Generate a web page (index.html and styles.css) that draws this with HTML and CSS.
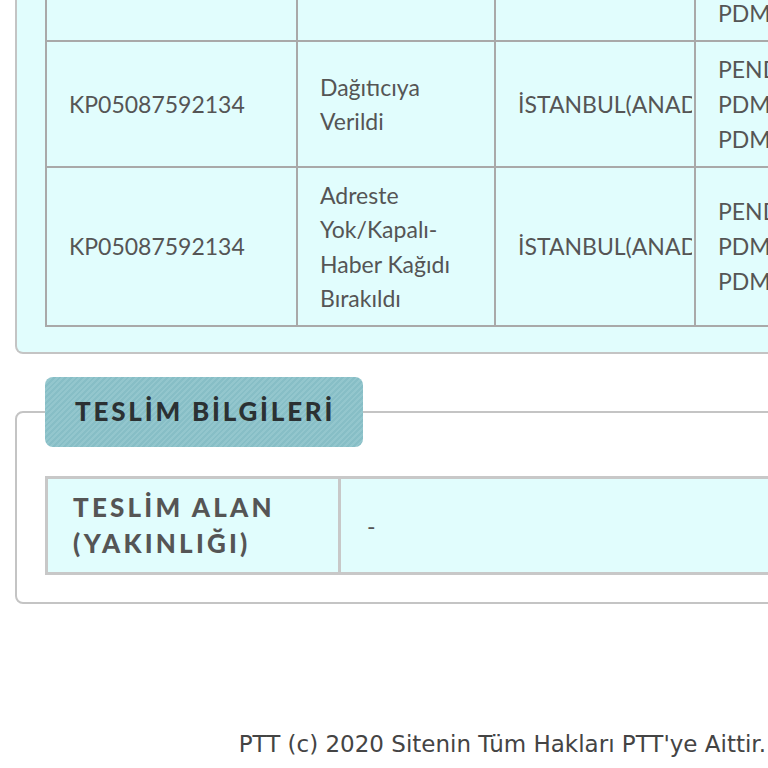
FILE: index.html
```html
<!DOCTYPE html>
<html lang="tr">
<head>
<meta charset="utf-8">
<title>Gönderi Takip</title>
<link rel="stylesheet" href="styles.css">
</head>
<body>
<div class="page">
  <div class="box box-moves">
    <table class="moves">
      <colgroup><col class="c1"><col class="c2"><col class="c3"><col class="c4"></colgroup>
      <tr>
        <td>KP05087592134</td>
        <td>Kabul Edildi</td>
        <td><span class="clip">İSTANBUL(ANADOLU)</span></td>
        <td class="place">PENDİK<br>PDM<br>PDM</td>
      </tr>
      <tr>
        <td>KP05087592134</td>
        <td>Dağıtıcıya Verildi</td>
        <td><span class="clip">İSTANBUL(ANADOLU)</span></td>
        <td class="place">PENDİK<br>PDM<br>PDM</td>
      </tr>
      <tr>
        <td>KP05087592134</td>
        <td>Adreste Yok/Kapalı-Haber Kağıdı Bırakıldı</td>
        <td><span class="clip">İSTANBUL(ANADOLU)</span></td>
        <td class="place">PENDİK<br>PDM<br>PDM</td>
      </tr>
    </table>
  </div>

  <fieldset class="box box-deliver">
    <legend class="legend">TESLİM BİLGİLERİ</legend>
    <table class="deliver">
      <tr>
        <th>TESLİM ALAN (YAKINLIĞI)</th>
        <td>-</td>
      </tr>
    </table>
  </fieldset>

  <footer class="footer">PTT (c) 2020 Sitenin Tüm Hakları PTT'ye Aittir.</footer>
</div>
</body>
</html>
```

FILE: styles.css
```css
html, body {
  margin: 0;
  padding: 0;
  background: #fff;
  overflow: hidden;
}

.page {
  width: 1100px;
  font-family: Lato, "Open Sans", sans-serif;
  color: #555;
}

.box {
  margin: 0 0 0 15px;
  border: 2px solid #c4c4c4;
  border-radius: 8px;
}

.box-moves {
  margin-top: -86px;
  border-top: none;
  border-radius: 0 0 8px 8px;
  background: #e1fdfd;
  padding: 0 0 25px 28px;
}

.moves {
  border-collapse: collapse;
  table-layout: fixed;
  width: 1049px;
  font-size: 23px;
  line-height: 34.5px;
}

.moves col.c1 { width: 251px; }
.moves col.c2 { width: 198px; }
.moves col.c3 { width: 200px; }
.moves col.c4 { width: 400px; }

.moves td {
  border: 2px solid #a9a9a9;
  padding: 9.5px 22px;
  vertical-align: middle;
  overflow: hidden;
}

.moves td:nth-child(2) {
  padding-right: 10px;
}

.moves td.place {
  line-height: 35px;
}

.clip {
  display: block;
  white-space: nowrap;
  overflow: hidden;
  margin-right: -20px;
}

.box-deliver {
  margin-top: 23px;
  padding: 0 0 27px 28px;
  background: #fff;
}

.legend {
  padding: 20px 28px 21px 30px;
  border-radius: 8px;
  background: repeating-linear-gradient(135deg, #93c6cd 0 2px, #87bec6 2px 4px);
  color: #2b3133;
  font-weight: 900;
  font-size: 26px;
  letter-spacing: 2.8px;
  line-height: 29px;
}

.deliver {
  margin-top: 29px;
  border-collapse: collapse;
  width: 1050px;
  table-layout: fixed;
  border: 3px solid #c8c8c8;
  background: #e1fdfd;
}

.deliver th {
  width: 245px;
  text-align: left;
  border-right: 3px solid #c8c8c8;
  padding: 10px 20px 11px 25px;
  font-size: 26px;
  font-weight: 900;
  letter-spacing: 3.2px;
  line-height: 36px;
  color: #555;
}

.deliver td {
  padding: 10px 26px;
  font-size: 23px;
  color: #555;
}

.footer {
  width: 766px;
  text-align: right;
  margin-top: 127px;
  font-family: "DejaVu Sans", Verdana, sans-serif;
  font-size: 23px;
  color: #444;
}
```
